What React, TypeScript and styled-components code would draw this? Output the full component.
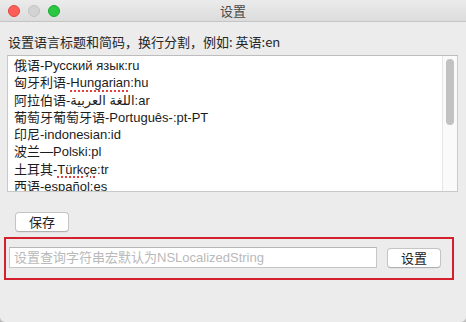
import React from "react";
import styled, { createGlobalStyle } from "styled-components";

const Global = createGlobalStyle`
  html, body { margin: 0; padding: 0; background: #b9b9b9; }
  body { font-family: "Liberation Sans", "Noto Sans CJK SC", "DejaVu Sans", sans-serif; }
  * { box-sizing: border-box; }
`;

const Window = styled.div`
  width: 466px;
  height: 322px;
  background: #ececec;
  display: flex;
  flex-direction: column;
  border-radius: 0 0 5px 5px;
  overflow: hidden;
  font-size: 13px;
  color: #222;
`;

const TitleBar = styled.div`
  height: 22px;
  flex: none;
  display: flex;
  align-items: center;
  position: relative;
  background: linear-gradient(#ebebeb, #dcdcdc);
  border-bottom: 1px solid #c4c4c4;
  padding-left: 8px;
  gap: 8px;
`;

const Light = styled.span<{ $c: string; $b: string }>`
  width: 12px;
  height: 12px;
  border-radius: 50%;
  background: ${(p) => p.$c};
  border: 0.5px solid ${(p) => p.$b};
  margin-top: 1px;
`;

const Title = styled.div`
  position: absolute;
  left: 0;
  right: 0;
  top: 0;
  bottom: 0;
  display: flex;
  align-items: center;
  justify-content: center;
  color: #4a4a4a;
  font-size: 13px;
  font-family: "Noto Sans CJK SC", sans-serif;
  pointer-events: none;
`;

const Label = styled.div`
  margin: 12px 0 0 8px;
  line-height: 16px;
  height: 16px;
  color: #262626;
  font-family: "Noto Sans CJK SC", sans-serif;
  white-space: nowrap;
`;

const TextBox = styled.div`
  margin: 5px 0 0 7px;
  width: 451px;
  height: 137px;
  background: #fff;
  border: 1px solid #c9c9c9;
  border-top-color: #bdbdbd;
  display: flex;
  overflow: hidden;
`;

const Lines = styled.div`
  flex: 1;
  padding: 1px 0 0 6px;
  overflow: hidden;
`;

const Line = styled.div`
  line-height: 17.3px;
  height: 17.3px;
  white-space: nowrap;
  color: #1c1c1c;
  unicode-bidi: plaintext;
  direction: ltr;
`;

const Misspelled = styled.span`
  text-decoration: underline dotted #e2403f;
  text-decoration-thickness: 1.5px;
  text-underline-offset: 3px;
`;

const ScrollTrack = styled.div`
  width: 15px;
  flex: none;
  background: #fafafa;
  border-left: 1px solid #e6e6e6;
  padding: 3px 0 0 3px;
`;

const Thumb = styled.div`
  width: 8px;
  height: 66px;
  border-radius: 4px;
  background: #c2c2c2;
`;

const MacButton = styled.button`
  width: 54px;
  height: 20px;
  background: #fff;
  border: 1px solid #c4c4c4;
  border-bottom-color: #b0b0b0;
  border-radius: 4px;
  font-family: "Noto Sans CJK SC", sans-serif;
  font-size: 13px;
  color: #222;
  padding: 0;
  line-height: 18px;
  box-shadow: 0 0.5px 0.5px rgba(0, 0, 0, 0.08);
  flex: none;
`;

const SaveButton = styled(MacButton)`
  margin: 20px 0 0 15px;
`;

const Highlight = styled.div`
  margin: 5px 0 0 4px;
  width: 450px;
  height: 43px;
  border: 2px solid #d4202c;
  display: flex;
  align-items: center;
  padding: 0 0 2px 3px;
  gap: 10px;
`;

const Input = styled.input`
  width: 368px;
  height: 21px;
  border: 1px solid #c6c6c6;
  border-top-color: #b6b6b6;
  background: #fff;
  padding: 0 4px;
  font-family: "Liberation Sans", "Noto Sans CJK SC", sans-serif;
  font-size: 13px;
  outline: none;
  &::placeholder {
    color: #b9b9b9;
  }
`;

export default function App() {
  return (
    <>
      <Global />
      <Window>
        <TitleBar>
          <Light $c="#fc5f57" $b="#e2463f" />
          <Light $c="#d3d3d3" $b="#c2c2c2" />
          <Light $c="#2ac740" $b="#1ea930" />
          <Title>设置</Title>
        </TitleBar>
        <Label>设置语言标题和简码，换行分割，例如: 英语:en</Label>
        <TextBox>
          <Lines>
            <Line>俄语-Русский язык:ru</Line>
            <Line>
              匈牙利语-<Misspelled>Hungarian</Misspelled>:hu
            </Line>
            <Line>阿拉伯语-<bdi>اللغة العربية</bdi>:ar</Line>
            <Line>葡萄牙葡萄牙语-Português-:pt-PT</Line>
            <Line>印尼-indonesian:id</Line>
            <Line>波兰—Polski:pl</Line>
            <Line>
              土耳其-<Misspelled>Türkçe</Misspelled>:tr
            </Line>
            <Line>西语-español:es</Line>
          </Lines>
          <ScrollTrack>
            <Thumb />
          </ScrollTrack>
        </TextBox>
        <SaveButton>保存</SaveButton>
        <Highlight>
          <Input placeholder="设置查询字符串宏默认为NSLocalizedString" />
          <MacButton>设置</MacButton>
        </Highlight>
      </Window>
    </>
  );
}
